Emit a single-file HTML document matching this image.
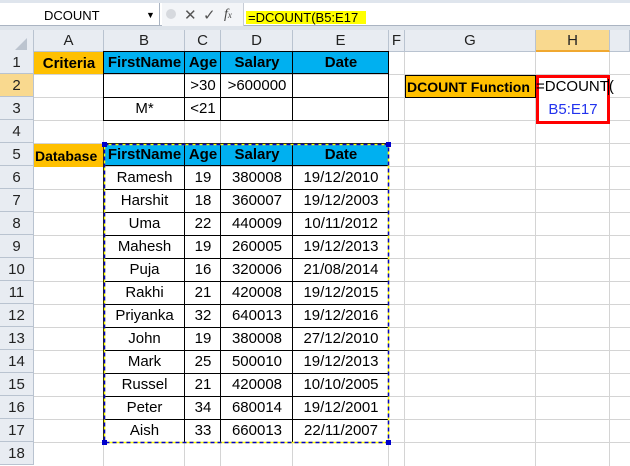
<!DOCTYPE html><html><head><style>
body{margin:0;width:630px;height:466px;overflow:hidden;background:#fff;font-family:"Liberation Sans",Arial,sans-serif;position:relative}
.a{position:absolute;box-sizing:border-box}
.c{position:absolute;box-sizing:border-box;display:flex;align-items:center;justify-content:center;font-size:15px;white-space:nowrap;overflow:visible}
.h{background:#e8ecf2;border-right:1px solid #b9c3d0;border-bottom:1px solid #b9c3d0;color:#222;font-size:15px}
.b{font-weight:bold}
</style></head><body>
<div class="a" style="left:0;top:0;width:630px;height:26px;background:#fff;border-bottom:1px solid #aab4c2"></div>
<div class="a" style="left:0;top:0;width:630px;height:3px;background:#dfe5ed"></div>
<div class="a" style="left:0;top:3px;width:160px;height:23px;border-right:1px solid #aab4c2"></div>
<div class="c" style="left:44px;top:5px;height:20px;font-size:13px">DCOUNT</div>
<div class="c" style="left:146px;top:5px;height:20px;font-size:9px">▼</div>
<div class="a" style="left:162px;top:3px;width:82px;height:23px;background:#f3f5f8;border-right:1px solid #c6ccd5"></div>
<div class="a" style="left:166px;top:9px;width:10px;height:10px;border-radius:50%;background:#d6d9de"></div>
<div class="c" style="left:184px;top:5px;height:20px;font-size:15px;color:#555">✕</div>
<div class="c" style="left:203px;top:5px;height:20px;font-size:15px;color:#555">✓</div>
<div class="c" style="left:224px;top:5px;height:20px;font-size:14px;font-style:italic;font-family:'Liberation Serif',serif;color:#444">f<span style="font-size:9px">x</span></div>
<div class="a" style="left:246px;top:11px;width:120px;height:13px;background:#ffff00"></div>
<div class="c" style="left:248px;top:9px;height:16px;font-size:13px">=DCOUNT(B5:E17</div>
<div class="a" style="left:0;top:26px;width:630px;height:4px;background:#dde3ea"></div>
<div class="a h" style="left:0;top:30px;width:34px;height:22px"></div>
<div class="a" style="left:15px;top:38px;width:0;height:0;border-left:12px solid transparent;border-bottom:12px solid #bcc4cf"></div>
<div class="c h" style="left:34px;top:30px;width:70px;height:22px">A</div>
<div class="c h" style="left:104px;top:30px;width:81px;height:22px">B</div>
<div class="c h" style="left:185px;top:30px;width:36px;height:22px">C</div>
<div class="c h" style="left:221px;top:30px;width:72px;height:22px">D</div>
<div class="c h" style="left:293px;top:30px;width:96px;height:22px">E</div>
<div class="c h" style="left:389px;top:30px;width:16px;height:22px">F</div>
<div class="c h" style="left:405px;top:30px;width:131px;height:22px">G</div>
<div class="c h" style="left:536px;top:30px;width:74px;height:22px;background:#f9d98f;border-bottom:2px solid #f0a830">H</div>
<div class="c h" style="left:610px;top:30px;width:20px;height:22px"></div>
<div id="rows"></div>
<svg class="a" style="left:0;top:0" width="630" height="466">
<g stroke="#d4d4d4" stroke-width="1">
<line x1="103.5" y1="52" x2="103.5" y2="466"/><line x1="184.5" y1="52" x2="184.5" y2="466"/><line x1="220.5" y1="52" x2="220.5" y2="466"/><line x1="292.5" y1="52" x2="292.5" y2="466"/><line x1="388.5" y1="52" x2="388.5" y2="466"/><line x1="404.5" y1="52" x2="404.5" y2="466"/><line x1="535.5" y1="52" x2="535.5" y2="466"/><line x1="609.5" y1="52" x2="609.5" y2="466"/>
<line x1="34" y1="74.5" x2="630" y2="74.5"/><line x1="34" y1="97.5" x2="630" y2="97.5"/><line x1="34" y1="120.5" x2="630" y2="120.5"/><line x1="34" y1="143.5" x2="630" y2="143.5"/><line x1="34" y1="166.5" x2="630" y2="166.5"/><line x1="34" y1="189.5" x2="630" y2="189.5"/><line x1="34" y1="212.5" x2="630" y2="212.5"/><line x1="34" y1="235.5" x2="630" y2="235.5"/><line x1="34" y1="258.5" x2="630" y2="258.5"/><line x1="34" y1="281.5" x2="630" y2="281.5"/><line x1="34" y1="304.5" x2="630" y2="304.5"/><line x1="34" y1="327.5" x2="630" y2="327.5"/><line x1="34" y1="350.5" x2="630" y2="350.5"/><line x1="34" y1="373.5" x2="630" y2="373.5"/><line x1="34" y1="396.5" x2="630" y2="396.5"/><line x1="34" y1="419.5" x2="630" y2="419.5"/><line x1="34" y1="442.5" x2="630" y2="442.5"/>
</g></svg>
<script>
var R=document.getElementById('rows'),h='';
for(var i=1;i<=18;i++){var t=51+(i-1)*23;var bg=i==2?'background:#f9d98f;':'';h+='<div class="c h" style="'+bg+'left:0;top:'+t+'px;width:34px;height:23px">'+i+'</div>';}
R.innerHTML=h;
</script>
<div class="c b" style="left:34px;top:52px;width:70px;height:22px;background:#ffc000">Criteria</div>
<div class="c b" style="left:34px;top:144px;width:70px;height:23px;background:#ffc000;justify-content:flex-start;padding-left:1px;font-size:14px">Database</div>
<div class="a" style="left:103px;top:51px;width:286px;height:70px;border:1px solid #000"></div>
<div class="a" style="left:104px;top:52px;width:284px;height:22px;background:#00b0f0;border-bottom:1px solid #000"></div>
<div class="a" style="left:103px;top:143px;width:286px;height:300px;border:1px solid #000"></div>
<div class="a" style="left:104px;top:144px;width:284px;height:22px;background:#00b0f0;border-bottom:1px solid #000"></div>
<svg class="a" style="left:0;top:0" width="630" height="466"><g stroke="#000">
<line x1="184.5" y1="51" x2="184.5" y2="121"/><line x1="220.5" y1="51" x2="220.5" y2="121"/><line x1="292.5" y1="51" x2="292.5" y2="121"/><line x1="104" y1="97.5" x2="389" y2="97.5"/>
<line x1="184.5" y1="143" x2="184.5" y2="443"/><line x1="220.5" y1="143" x2="220.5" y2="443"/><line x1="292.5" y1="143" x2="292.5" y2="443"/>
<line x1="104" y1="189.5" x2="389" y2="189.5"/><line x1="104" y1="212.5" x2="389" y2="212.5"/><line x1="104" y1="235.5" x2="389" y2="235.5"/><line x1="104" y1="258.5" x2="389" y2="258.5"/><line x1="104" y1="281.5" x2="389" y2="281.5"/><line x1="104" y1="304.5" x2="389" y2="304.5"/><line x1="104" y1="327.5" x2="389" y2="327.5"/><line x1="104" y1="350.5" x2="389" y2="350.5"/><line x1="104" y1="373.5" x2="389" y2="373.5"/><line x1="104" y1="396.5" x2="389" y2="396.5"/><line x1="104" y1="419.5" x2="389" y2="419.5"/>
</g>
<rect x="104.5" y="144.5" width="284" height="298" fill="none" stroke="#ffff00" stroke-width="1.5"/>
<rect x="104.5" y="144.5" width="284" height="298" fill="none" stroke="#0000cc" stroke-width="1.5" stroke-dasharray="4 3"/>
<rect x="102" y="142" width="5" height="5" fill="#0000cc"/><rect x="386" y="142" width="5" height="5" fill="#0000cc"/><rect x="102" y="440" width="5" height="5" fill="#0000cc"/><rect x="386" y="440" width="5" height="5" fill="#0000cc"/>
</svg>
<div id="d"></div>
<script>
var d=[["FirstName","Age","Salary","Date"],["Ramesh","19","380008","19/12/2010"],["Harshit","18","360007","19/12/2003"],["Uma","22","440009","10/11/2012"],["Mahesh","19","260005","19/12/2013"],["Puja","16","320006","21/08/2014"],["Rakhi","21","420008","19/12/2015"],["Priyanka","32","640013","19/12/2016"],["John","19","380008","27/12/2010"],["Mark","25","500010","19/12/2013"],["Russel","21","420008","10/10/2005"],["Peter","34","680014","19/12/2001"],["Aish","33","660013","22/11/2007"]];
var X=[[104,81],[185,36],[221,72],[293,96]],s='';
function cell(x,w,y,t,b){return '<div class="c'+(b?' b':'')+'" style="left:'+x+'px;top:'+y+'px;width:'+w+'px;height:23px">'+t+'</div>';}
var H=["FirstName","Age","Salary","Date"];for(var j=0;j<4;j++)s+=cell(X[j][0],X[j][1],51,H[j],1);
s+=cell(185,36,74,'&gt;30')+cell(221,72,74,'&gt;600000')+cell(104,81,97,'M*')+cell(185,36,97,'&lt;21');
for(var i=0;i<d.length;i++)for(var j=0;j<4;j++)s+=cell(X[j][0],X[j][1],143+i*23,d[i][j],i==0);
document.getElementById('d').innerHTML=s;
</script>
<div class="c b" style="left:405px;top:75px;width:131px;height:23px;background:#ffc000;border:1px solid #000;justify-content:flex-start;padding-left:1px;font-size:14px">DCOUNT Function</div>
<div class="a" style="left:536px;top:75px;width:74px;height:49px;background:#fff;border:3px solid #ff0000"></div>
<div class="c" style="left:536px;top:75px;height:23px">=DCOUNT(</div>
<div class="a" style="left:608px;top:79px;width:1px;height:16px;background:#000"></div>
<div class="c" style="left:536px;top:98px;width:74px;height:23px;color:#2233ee">B5:E17</div>
</body></html>
